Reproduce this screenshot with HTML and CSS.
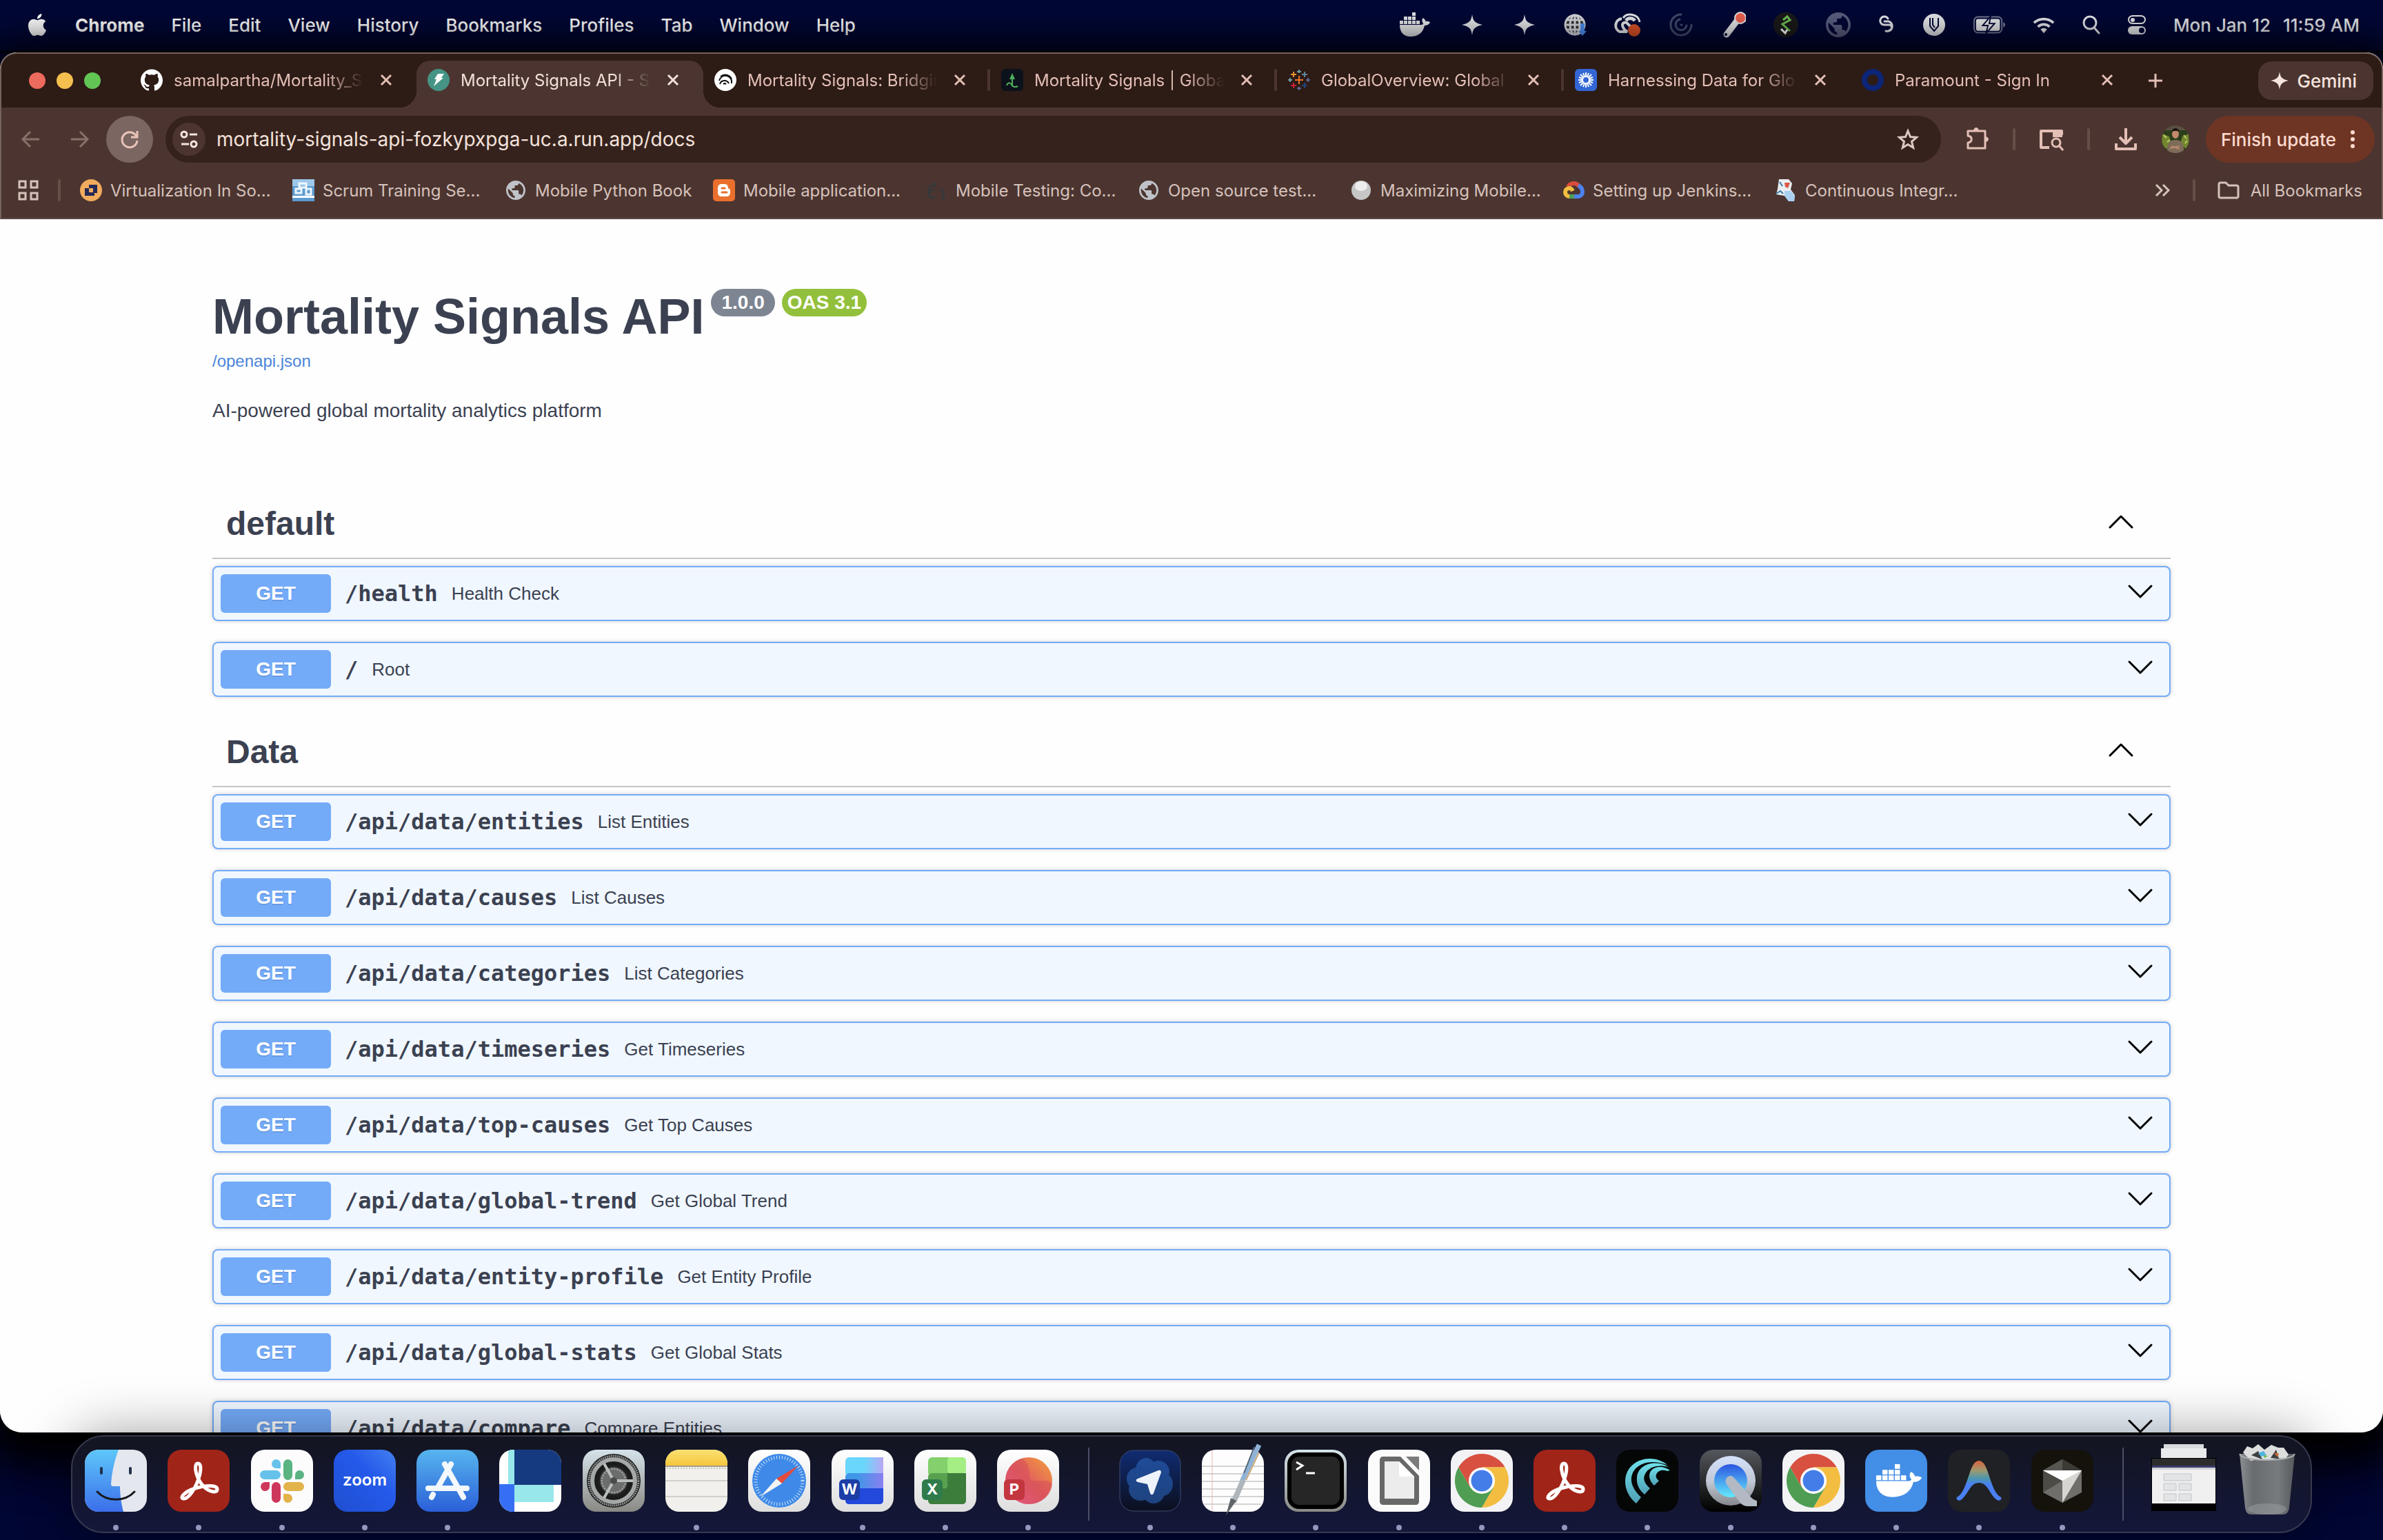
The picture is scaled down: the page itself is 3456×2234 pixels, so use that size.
FILE: index.html
```html
<!DOCTYPE html>
<html lang="en">
<head>
    <meta charset="UTF-8">
    <meta name="viewport" content="width=device-width, initial-scale=1.0">
    <title>Mortality Signals API - Swagger UI</title>
    <link rel="stylesheet" href="styles.css">
</head>
<body>
    <!-- Shared shapes -->
    <svg class="defs" width="0" height="0" aria-hidden="true">
        <defs>
            <symbol id="close" viewBox="0 0 20 20"><path d="M3 3l14 14M17 3L3 17" stroke="currentColor" stroke-width="3" fill="none"/></symbol>
            <symbol id="down" viewBox="0 0 40 40"><path d="M4 9l16 16L36 9" fill="none" stroke="#000" stroke-width="3" stroke-linecap="round" stroke-linejoin="round"/></symbol>
            <symbol id="up" viewBox="0 0 40 40"><path d="M4 25l16-16 16 16" fill="none" stroke="#000" stroke-width="3" stroke-linecap="round" stroke-linejoin="round"/></symbol>
            <symbol id="sparkle" viewBox="0 0 30 30"><path d="M15 0c1 6 2 9 5 11 3 2.5 6 3 10 4-4 1-7 1.500-10 4-3 2-4 5-5 11-1-6-2-9-5-11-3-2.500-6-3-10-4 4-1 7-1.500 10-4 3-2 4-5 5-11z" fill="currentColor"/></symbol>
            <symbol id="earth" viewBox="2 2 20 20"><path fill="currentColor" d="M12 2C6.480 2 2 6.480 2 12s4.480 10 10 10 10-4.480 10-10S17.520 2 12 2zm-1 17.930c-3.950-.49-7-3.850-7-7.930 0-.62.08-1.210.21-1.790L9 15v1c0 1.100.9 2 2 2v1.930zm6.900-2.540c-.26-.81-1-1.390-1.900-1.390h-1v-3c0-.55-.45-1-1-1H8v-2h2c.55 0 1-.45 1-1V7h2c1.100 0 2-.9 2-2v-.41c2.930 1.190 5 4.060 5 7.410 0 2.080-.8 3.970-2.100 5.390z"/></symbol>
            <symbol id="whale" viewBox="0 0 44 36">
                <path fill="currentColor" d="M0 18h31c2 0 3-1 3-2-2-3-2-5-.5-8 2.500 1 3.500 3 4 5 2-.5 4 0 6.500 1-1 3.500-4 5-8 5-2 10-9 16-20 16C5 35 0 28 0 18zM0 12h5v5H0zM6 12h5v5H6zM12 12h5v5h-5zM18 12h5v5h-5zM24 12h5v5h-5zM6 6h5v5H6zM12 6h5v5h-5zM18 6h5v5h-5zM18 0h5v5h-5z"/>
            </symbol>
            <symbol id="acrobat" viewBox="0 0 90 90">
                <rect width="90" height="90" rx="20" fill="#a12418"/>
                <path d="M44 20c5 0 5 10 1 22C40 57 30 72 23 71c-6-1 1-10 17-15 17-5 33-5 32 2-1 6-15 3-24-10C40 36 38 20 44 20z" fill="none" stroke="#fff" stroke-width="5"/>
            </symbol>
            <symbol id="chrome" viewBox="0 0 90 90">
                <rect width="90" height="90" rx="20" fill="#f3f3f5"/>
                <path d="M11.200 25.500A39 39 0 0 1 78.800 25.500H45L28.100 54.750z" fill="#d8503f"/>
                <path d="M78.800 25.500A39 39 0 0 1 45 84l16.900-29.250L45 25.500z" fill="#f3bd42"/>
                <path d="M45 84A39 39 0 0 1 11.200 25.500l16.900 29.250h33.800z" fill="#4f9d52"/>
                <circle cx="45" cy="45" r="19" fill="#fff"/>
                <circle cx="45" cy="45" r="15.500" fill="#447de8"/>
            </symbol>
            <linearGradient id="gSky" x2="0" y2="1"><stop stop-color="#57b5ef"/><stop offset="1" stop-color="#2a5fd8"/></linearGradient>
            <linearGradient id="gFinder" x2="0" y2="1"><stop stop-color="#5ec7fa"/><stop offset="1" stop-color="#3b6eea"/></linearGradient>
            <linearGradient id="gPaper" x2="0" y2="1"><stop stop-color="#fff"/><stop offset="1" stop-color="#dedede"/></linearGradient>
            <linearGradient id="gZoom" x1="1" y1="0" x2="0" y2="1"><stop stop-color="#4480f0"/><stop offset=".4" stop-color="#2459ea"/><stop offset="1" stop-color="#1f4fd0"/></linearGradient>
            <linearGradient id="gSilver" x2="0" y2="1"><stop stop-color="#d5e3ea"/><stop offset="1" stop-color="#8a8984"/></linearGradient>
            <linearGradient id="gYellow" x2="0" y2="1"><stop stop-color="#fae173"/><stop offset="1" stop-color="#f5c63c"/></linearGradient>
            <linearGradient id="gNight" x2="0" y2="1"><stop stop-color="#102c72"/><stop offset="1" stop-color="#0c0f1e"/></linearGradient>
            <linearGradient id="gPpt" x1="0" y1="1" x2="1" y2="0"><stop stop-color="#ee66b0"/><stop offset=".5" stop-color="#e2605c"/><stop offset="1" stop-color="#f2a03c"/></linearGradient>
            <linearGradient id="gWordA" x2="1"><stop offset=".5" stop-color="#6ad6fb"/><stop offset="1" stop-color="#b9a8f4"/></linearGradient>
            <linearGradient id="gWordB" x2="1"><stop offset=".3" stop-color="#3f97e8"/><stop offset="1" stop-color="#8a7ff0"/></linearGradient>
            <linearGradient id="gDark" x2="0" y2="1"><stop stop-color="#55585d"/><stop offset="1" stop-color="#000"/></linearGradient>
            <linearGradient id="gSteel" x2="0" y2="1"><stop stop-color="#d4e2fb"/><stop offset=".5" stop-color="#c3c9d6"/><stop offset="1" stop-color="#85888d"/></linearGradient>
            <linearGradient id="gLens" x2="0" y2="1"><stop stop-color="#2c55e0"/><stop offset="1" stop-color="#64eafc"/></linearGradient>
            <linearGradient id="gArc" x2="0" y2="1"><stop stop-color="#d8643f"/><stop offset=".25" stop-color="#9c9a70"/><stop offset=".45" stop-color="#4a95b0"/><stop offset=".6" stop-color="#4b80f2"/></linearGradient>
            <linearGradient id="gBin" x2="1"><stop stop-color="#8b8f92"/><stop offset=".25" stop-color="#686c6f"/><stop offset=".7" stop-color="#777b7e"/><stop offset="1" stop-color="#55595c"/></linearGradient>
            <linearGradient id="gTeal" x2="0" y2="1"><stop stop-color="#6fe0ea"/><stop offset="1" stop-color="#4f9fb4"/></linearGradient>
        </defs>
    </svg>

    <!-- System menu bar -->
    <header class="menubar">
        <nav class="menus">
            <svg class="apple" viewBox="0 0 24 24" width="32" height="32"><path fill="#fff" d="M12.152 6.896c-.948 0-2.415-1.078-3.960-1.040-2.040.027-3.910 1.183-4.961 3.014-2.117 3.675-.546 9.103 1.519 12.090 1.013 1.454 2.208 3.090 3.792 3.039 1.520-.065 2.090-.987 3.935-.987 1.831 0 2.350.987 3.960.948 1.637-.026 2.676-1.480 3.676-2.948 1.156-1.688 1.636-3.325 1.662-3.415-.039-.013-3.182-1.221-3.220-4.857-.026-3.040 2.480-4.494 2.597-4.559-1.429-2.090-3.623-2.324-4.390-2.376-2-.156-3.675 1.090-4.610 1.090zM15.530 3.830c.843-1.012 1.400-2.427 1.245-3.830-1.207.052-2.662.805-3.532 1.818-.78.896-1.454 2.338-1.273 3.714 1.338.104 2.715-.688 3.559-1.701"/></svg>
            <strong>Chrome</strong>
            <span>File</span>
            <span>Edit</span>
            <span>View</span>
            <span>History</span>
            <span>Bookmarks</span>
            <span>Profiles</span>
            <span>Tab</span>
            <span>Window</span>
            <span>Help</span>
        </nav>
        <div class="status">
            <svg width="44" height="36"><use href="#whale"/></svg>
            <svg width="42" height="30"><use href="#sparkle"/></svg>
            <svg width="30" height="30"><use href="#sparkle"/></svg>
            <svg width="36" height="34" viewBox="0 0 36 34"><circle cx="18" cy="17" r="15" fill="#333"/><g fill="none" stroke="#d5d7dc" stroke-width="3"><circle cx="18" cy="17" r="14"/><ellipse cx="18" cy="17" rx="7" ry="14"/><path d="M18 3v28M4 17h28M6 10h24M6 24h24"/></g><path d="M26 15h6v11h3l-6 7-6-7h3z" fill="#4f93f5"/></svg>
            <svg width="36" height="36" viewBox="0 0 36 36" overflow="visible"><g fill="none" stroke="#e6e7ea"><path d="M10 9a10 10 0 0 0-3 19h11c-4-2-6-5-7-9a4 4 0 0 1 7-3l6 6" stroke-width="4"/><path d="M12 8C18 0 34 2 36 14" stroke-width="3"/><path d="M16 12c4-5 10-4 13 0" stroke-width="5"/></g><circle cx="28" cy="26" r="9" fill="#dc5228"/></svg>
            <svg width="40" height="34" viewBox="0 0 40 34"><g fill="none" stroke="#444a6c" stroke-width="3" stroke-linecap="round"><path d="M20 2a15 15 0 1 0 15 15"/><path d="M18 9a8 8 0 1 0 10 9"/><path d="M20 17h1"/></g></svg>
            <svg width="34" height="40" viewBox="0 0 34 40"><path d="M6 34L22 13" stroke="#e6e7ea" stroke-width="9" stroke-linecap="round"/><circle cx="26" cy="10" r="9" fill="#e6e7ea"/><circle cx="26" cy="10" r="7" fill="#ee6352"/><circle cx="5" cy="34" r="2" fill="#000735"/></svg>
            <svg width="36" height="36" viewBox="0 0 36 36"><circle cx="18" cy="18" r="18" fill="#1a1a1a"/><path d="M14 11l6-5 4 5-11 6 11 10" fill="none" stroke="#6fbf57" stroke-width="3"/><path d="M11 24l6 6 3-5" fill="none" stroke="#fff" stroke-width="3"/></svg>
            <svg class="dim" width="36" height="36"><use href="#earth"/></svg>
            <svg width="24" height="30" viewBox="0 0 24 30"><g fill="none" stroke="#e6e7ea" stroke-width="3" stroke-linecap="round"><path d="M14 6A6 6 0 1 0 8 15h7a4 4 0 0 1 1 8"/><path d="M9 10h6a7 7 0 1 1-4 14"/></g></svg>
            <svg width="34" height="32" viewBox="0 0 34 32"><circle cx="17" cy="16" r="16" fill="#e6e7ea"/><path d="M11 6v12l6 7 6-7V6M15 6v10l3 4" fill="none" stroke="#000735" stroke-width="2"/></svg>
            <svg width="46" height="26" viewBox="0 0 48 26"><rect x="1" y="1" width="42" height="24" rx="6" fill="none" stroke="#767a94" stroke-width="2"/><rect x="4" y="4" width="36" height="18" rx="3" fill="#e6e7ea"/><path d="M45 9c4 1 4 7 0 8z" fill="#767a94"/><path d="M26 0L14 14h8l-3 12 13-15h-8z" fill="#e6e7ea" stroke="#000735" stroke-width="2"/></svg>
            <svg width="32" height="26" viewBox="0 0 34 26"><g fill="none" stroke="#e6e7ea" stroke-width="4"><path d="M2 10a22 22 0 0 1 30 0"/><path d="M8 16a13 13 0 0 1 18 0"/></g><path d="M17 26l-5-6a8 8 0 0 1 10 0z" fill="#e6e7ea"/></svg>
            <svg width="26" height="28" viewBox="0 0 26 28"><circle cx="11" cy="11" r="9" fill="none" stroke="#e6e7ea" stroke-width="3"/><path d="M17 18l7 8" stroke="#e6e7ea" stroke-width="3" stroke-linecap="round"/></svg>
            <svg width="26" height="28" viewBox="0 0 26 28"><rect x="1" y="1" width="24" height="11" rx="6" fill="none" stroke="#e6e7ea" stroke-width="2"/><circle cx="7" cy="7" r="3" fill="#e6e7ea"/><rect y="16" width="26" height="12" rx="6" fill="#e6e7ea"/><circle cx="20" cy="22" r="4" fill="#000735"/></svg>
            <time class="clock"><span>Mon Jan 12</span><span>11:59 AM</span></time>
        </div>
    </header>

    <!-- Browser window -->
    <main class="window">
        <div class="browser">
            <div class="tabstrip">
                <div class="lights"><i class="red"></i><i class="yellow"></i><i class="green"></i></div>
                <div class="tab">
                    <svg width="32" height="32" viewBox="0 0 24 24"><path fill="#fff" d="M12 .297c-6.630 0-12 5.373-12 12 0 5.303 3.438 9.800 8.205 11.385.6.113.82-.258.82-.577 0-.285-.01-1.040-.015-2.040-3.338.724-4.042-1.610-4.042-1.610C4.422 18.070 3.633 17.700 3.633 17.700c-1.087-.744.084-.729.084-.729 1.205.084 1.838 1.236 1.838 1.236 1.070 1.835 2.809 1.305 3.495.998.108-.776.417-1.305.76-1.605-2.665-.3-5.466-1.332-5.466-5.930 0-1.310.465-2.380 1.235-3.220-.135-.303-.54-1.523.105-3.176 0 0 1.005-.322 3.300 1.230.96-.267 1.980-.399 3-.405 1.020.006 2.040.138 3 .405 2.280-1.552 3.285-1.230 3.285-1.230.645 1.653.24 2.873.12 3.176.765.84 1.230 1.910 1.230 3.220 0 4.610-2.805 5.625-5.475 5.920.42.36.81 1.096.81 2.220 0 1.606-.015 2.896-.015 3.286 0 .315.21.69.825.57C20.565 22.092 24 17.592 24 12.297c0-6.627-5.373-12-12-12"/></svg>
                    <span class="tab-title">samalpartha/Mortality_S</span>
                    <button class="tab-close" aria-label="Close tab"><svg width="20" height="20"><use href="#close"/></svg></button>
                </div>
                <div class="tab active">
                    <svg width="32" height="32" viewBox="0 0 32 32"><circle cx="16" cy="16" r="16" fill="#459485"/><path d="M15 7h9l-4 6h3L9 25l4-10H10z" fill="#fff"/></svg>
                    <span class="tab-title">Mortality Signals API - S</span>
                    <button class="tab-close" aria-label="Close tab"><svg width="20" height="20"><use href="#close"/></svg></button>
                </div>
                <div class="tab line">
                    <svg width="32" height="32" viewBox="0 0 32 32"><circle cx="16" cy="16" r="16" fill="#fff"/><g fill="none" stroke="#111" stroke-width="2"><path d="M7 17a9 9 0 0 1 18 4"/><path d="M8 22a7 7 0 0 1 13-1"/><path d="M9 11a10 10 0 0 1 16 4"/><path d="M13 22a3 3 0 0 1 4 0"/></g></svg>
                    <span class="tab-title">Mortality Signals: Bridgin</span>
                    <button class="tab-close" aria-label="Close tab"><svg width="20" height="20"><use href="#close"/></svg></button>
                </div>
                <div class="tab line">
                    <svg width="32" height="32" viewBox="0 0 32 32"><rect width="32" height="32" rx="6" fill="#0c121b"/><path d="M16 12v11c0 3 4 4 8 2M8 24c2-5 6-5 8 1" fill="none" stroke="#4fae5c" stroke-width="2"/><path d="M16 6l4 9h-8z" fill="#4fae5c"/></svg>
                    <span class="tab-title">Mortality Signals | Globa</span>
                    <button class="tab-close" aria-label="Close tab"><svg width="20" height="20"><use href="#close"/></svg></button>
                </div>
                <div class="tab line">
                    <svg width="32" height="32" viewBox="0 0 32 32" fill="none" stroke-width="2"><path d="M16 10v12M10 16h12" stroke="#e8762c"/><path d="M8 4v8M4 8h8" stroke="#eb912c"/><path d="M24 4v8M20 8h8" stroke="#5b879b"/><path d="M8 20v8M4 24h8" stroke="#c72035"/><path d="M24 20v8M20 24h8" stroke="#1f457e"/><path d="M16 1v5M13 4h6M3 13v6M0 16h6" stroke="#7099a6"/><path d="M16 26v5M13 28h6M29 13v6M26 16h6" stroke="#5c6692"/></svg>
                    <span class="tab-title">GlobalOverview: Global</span>
                    <button class="tab-close" aria-label="Close tab"><svg width="20" height="20"><use href="#close"/></svg></button>
                </div>
                <div class="tab">
                    <svg width="32" height="32" viewBox="0 0 32 32"><rect width="32" height="32" rx="6" fill="#3367d6"/><path d="M16 5v22M5 16h22M8 8l16 16M24 8L8 24M12 6l8 20M20 6l-8 20M6 12l20 8M26 12L6 20" stroke="#fff" stroke-width="2"/><circle cx="16" cy="16" r="4" fill="#3367d6"/></svg>
                    <span class="tab-title">Harnessing Data for Glo</span>
                    <button class="tab-close" aria-label="Close tab"><svg width="20" height="20"><use href="#close"/></svg></button>
                </div>
                <div class="tab">
                    <svg width="32" height="32" viewBox="0 0 32 32"><circle cx="16" cy="16" r="12" fill="none" stroke="#0c2577" stroke-width="8"/></svg>
                    <span class="tab-title">Paramount - Sign In</span>
                    <button class="tab-close" aria-label="Close tab"><svg width="20" height="20"><use href="#close"/></svg></button>
                </div>
                <button class="new-tab" aria-label="New tab"><svg width="24" height="24" viewBox="0 0 24 24"><path d="M12 2v20M2 12h20" stroke="currentColor" stroke-width="3"/></svg></button>
                <button class="gemini"><svg width="26" height="26"><use href="#sparkle"/></svg>Gemini</button>
            </div>

            <div class="toolbar">
                <button class="nav-btn faded" aria-label="Back"><svg width="28" height="28" viewBox="0 0 28 28"><path d="M27 14H3M14 3L3 14l11 11" fill="none" stroke="currentColor" stroke-width="3"/></svg></button>
                <button class="nav-btn faded" aria-label="Forward"><svg width="28" height="28" viewBox="0 0 28 28"><path d="M1 14h24M14 3l11 11-11 11" fill="none" stroke="currentColor" stroke-width="3"/></svg></button>
                <button class="nav-btn reload" aria-label="Reload"><svg width="28" height="28" viewBox="0 0 28 28"><path d="M24 10a11 11 0 1 0 1 6M25 2v9h-9" fill="none" stroke="currentColor" stroke-width="3"/></svg></button>
                <div class="address">
                    <button class="site-info" aria-label="Site information"><svg width="28" height="28" viewBox="0 0 28 28"><g fill="none" stroke="#f4e5e0" stroke-width="3"><circle cx="7" cy="7" r="4"/><path d="M15 7h11M3 21h11"/><circle cx="21" cy="21" r="4"/></g></svg></button>
                    <input class="url" type="text" aria-label="Address" value="mortality-signals-api-fozkypxpga-uc.a.run.app/docs">
                    <button class="star" aria-label="Bookmark this page"><svg width="32" height="32" viewBox="0 0 32 32"><path d="M16 4l3.500 8.500 9 .8-7 6 2.200 9L16 23.500l-7.700 4.800 2.200-9-7-6 9-.8z" fill="none" stroke="#d9c8c3" stroke-width="3"/></svg></button>
                </div>
                <div class="actions">
                    <svg width="36" height="36" viewBox="0 0 36 36"><path d="M5 6h25v25H5v-8c7-1 7-9 0-10z" fill="none" stroke="currentColor" stroke-width="3" stroke-linejoin="round"/><path d="M13 6a4 5 0 0 1 8 0zM30 14a5 4 0 0 1 0 8z" fill="currentColor"/></svg>
                    <i class="divider"></i>
                    <svg width="36" height="36" viewBox="0 0 36 36"><path d="M15 30H3V6h30v6" fill="none" stroke="currentColor" stroke-width="4" stroke-linejoin="round"/><path d="M20 5h14v10H20z" fill="currentColor"/><circle cx="25" cy="23" r="6" fill="none" stroke="currentColor" stroke-width="3"/><path d="M29 27l6 7" stroke="currentColor" stroke-width="3"/></svg>
                    <i class="divider"></i>
                    <svg width="36" height="36" viewBox="0 0 36 36"><path d="M18 2v22M9 15l9 9 9-9M4 24v8h28v-8" fill="none" stroke="currentColor" stroke-width="4" stroke-linejoin="round"/></svg>
                    <svg class="avatar" width="40" height="40" viewBox="0 0 40 40"><rect width="40" height="40" fill="#2c3d1a"/><path d="M0 0h40v7H0z" fill="#5a4f42"/><path d="M1 12l10 4 3 12-8 6-6-8zM39 12l-9 4-3 10 8 8 5-8z" fill="#71862f"/><path d="M3 14l4 4M8 24l4-3M32 14l4 5M34 26l3-4" stroke="#c3cf6b" stroke-width="2"/><path d="M8 40c-1-12 2-19 12-19s13 7 12 19z" fill="#7d6c59"/><ellipse cx="20" cy="12" rx="5" ry="7" fill="#c2896b"/><path d="M15 10c-1-8 11-8 10 0l-2-2h-6z" fill="#1b1512"/><path d="M12 33l14-3M14 30l12 4" stroke="#b98a6c" stroke-width="2"/></svg>
                </div>
                <button class="update">Finish update<svg width="8" height="28" viewBox="0 0 8 28"><g fill="#ffdacf"><circle cx="4" cy="4" r="3"/><circle cx="4" cy="14" r="3"/><circle cx="4" cy="24" r="3"/></g></svg></button>
            </div>

            <div class="bookmarks">
                <svg class="apps" width="30" height="30" viewBox="0 0 30 30"><path d="M2 2h9v9H2zM19 2h9v9h-9zM2 19h9v9H2zM19 19h9v9h-9z" fill="none" stroke="currentColor" stroke-width="3"/></svg>
                <i class="divider"></i>
                <a class="bookmark" href="#"><svg width="32" height="32" viewBox="0 0 32 32"><circle cx="16" cy="16" r="16" fill="#f0ab5e"/><path d="M13 8h12v12h-4v4H7V13h6z" fill="#262a55"/><path d="M13 13h6v6h-6z" fill="#f0ab5e"/></svg>Virtualization In So...</a>
                <a class="bookmark" href="#"><svg width="32" height="32" viewBox="0 0 32 32"><rect width="32" height="32" fill="#5c9bd0"/><path d="M0 0h32v10H0z" fill="#9cc8ea"/><path d="M10 6h10v6H10zM5 14h8v6H5zM20 14h7v8h-7z" fill="none" stroke="#eef6fc" stroke-width="3"/><path d="M0 24h32v3H0z" fill="#fff"/></svg>Scrum Training Se...</a>
                <a class="bookmark auto" href="#"><svg class="grey" width="32" height="28"><use href="#earth"/></svg>Mobile Python Book</a>
                <a class="bookmark" href="#"><svg width="32" height="32" viewBox="0 0 32 32"><rect width="32" height="32" rx="5" fill="#ea6f2d"/><path d="M13 7h4c4 0 5 3 5 6 0 1 3 0 3 3v3c0 4-2 6-6 6h-6c-4 0-6-2-6-6v-6c0-4 2-6 6-6z" fill="#fff"/><path d="M13 13h4M13 19h7" stroke="#ea6f2d" stroke-width="3" stroke-linecap="round"/></svg>Mobile application...</a>
                <a class="bookmark" href="#"><svg width="32" height="32" viewBox="0 0 32 32"><g fill="none" stroke="#37383a" stroke-width="3"><path d="M5 12v14M5 12l9-6v6M13 16a5 6 0 1 0 2 9"/><path d="M20 16c6-3 8 2 5 11l4 1"/></g></svg>Mobile Testing: Co...</a>
                <a class="bookmark" href="#"><svg class="grey" width="32" height="28"><use href="#earth"/></svg>Open source test...</a>
                <a class="bookmark" href="#"><svg width="32" height="32" viewBox="0 0 32 32"><circle cx="16" cy="16" r="14" fill="#c6c6c6"/><ellipse cx="16" cy="10" rx="9" ry="7" fill="#ededed"/></svg>Maximizing Mobile...</a>
                <a class="bookmark" href="#"><svg width="32" height="32" viewBox="0 0 32 32" fill="none" stroke-width="6"><path d="M8 11c3-6 12-7 16-1" stroke="#da4c3b"/><path d="M23 9c8 4 8 15 0 16h-6" stroke="#4d82ee"/><path d="M17 25H9" stroke="#4f9f57"/><path d="M10 25c-8-1-8-12 0-12 3 0 4 2 5 4" stroke="#f0bd42"/></svg>Setting up Jenkins...</a>
                <a class="bookmark" href="#"><svg width="32" height="32" viewBox="0 0 32 32"><path d="M6 0h14l5 6-2 9 6 8-1 9h-8l-6-8-12-2 2-8z" fill="#e9eef2"/><path d="M14 17h9l6 7-1 8h-8l-6-8z" fill="#a9d0f0"/><path d="M14 5h8l-3 8-4-2z" fill="#dd5844"/><path d="M2 21l6-4 4 4M7 4l4 6" stroke="#3979a8" stroke-width="2" fill="none"/></svg>Continuous Integr...</a>
                <svg class="more" width="24" height="24" viewBox="0 0 24 24"><path d="M3 4l8 8-8 8M13 4l8 8-8 8" fill="none" stroke="currentColor" stroke-width="3"/></svg>
                <i class="divider"></i>
                <a class="bookmark all" href="#"><svg width="32" height="26" viewBox="0 0 32 26"><path d="M2 4c0-1 1-2 2-2h8l4 4h12c1 0 2 1 2 2v14c0 1-1 2-2 2H4c-1 0-2-1-2-2z" fill="none" stroke="currentColor" stroke-width="3"/></svg>All Bookmarks</a>
            </div>
        </div>

        <!-- Swagger page -->
        <div class="page">
            <section class="info">
                <div class="title-row">
                    <h1>Mortality Signals API</h1>
                    <span class="badge version">1.0.0</span>
                    <span class="badge oas">OAS 3.1</span>
                </div>
                <a class="spec-link" href="#">/openapi.json</a>
                <p class="description">AI-powered global mortality analytics platform</p>
            </section>

            <section>
                <button class="tag"><h2>default</h2><svg width="40" height="40"><use href="#up"/></svg></button>
                <button class="opblock"><span class="method">GET</span><code>/health</code><span class="summary">Health Check</span><svg width="40" height="40"><use href="#down"/></svg></button>
                <button class="opblock"><span class="method">GET</span><code>/</code><span class="summary">Root</span><svg width="40" height="40"><use href="#down"/></svg></button>
            </section>

            <section>
                <button class="tag"><h2>Data</h2><svg width="40" height="40"><use href="#up"/></svg></button>
                <button class="opblock"><span class="method">GET</span><code>/api/data/entities</code><span class="summary">List Entities</span><svg width="40" height="40"><use href="#down"/></svg></button>
                <button class="opblock"><span class="method">GET</span><code>/api/data/causes</code><span class="summary">List Causes</span><svg width="40" height="40"><use href="#down"/></svg></button>
                <button class="opblock"><span class="method">GET</span><code>/api/data/categories</code><span class="summary">List Categories</span><svg width="40" height="40"><use href="#down"/></svg></button>
                <button class="opblock"><span class="method">GET</span><code>/api/data/timeseries</code><span class="summary">Get Timeseries</span><svg width="40" height="40"><use href="#down"/></svg></button>
                <button class="opblock"><span class="method">GET</span><code>/api/data/top-causes</code><span class="summary">Get Top Causes</span><svg width="40" height="40"><use href="#down"/></svg></button>
                <button class="opblock"><span class="method">GET</span><code>/api/data/global-trend</code><span class="summary">Get Global Trend</span><svg width="40" height="40"><use href="#down"/></svg></button>
                <button class="opblock"><span class="method">GET</span><code>/api/data/entity-profile</code><span class="summary">Get Entity Profile</span><svg width="40" height="40"><use href="#down"/></svg></button>
                <button class="opblock"><span class="method">GET</span><code>/api/data/global-stats</code><span class="summary">Get Global Stats</span><svg width="40" height="40"><use href="#down"/></svg></button>
                <button class="opblock"><span class="method">GET</span><code>/api/data/compare</code><span class="summary">Compare Entities</span><svg width="40" height="40"><use href="#down"/></svg></button>
            </section>
        </div>
    </main>

    <!-- Dock -->
    <footer class="dock-area">
        <div class="dock">
            <div class="app running"><svg viewBox="0 0 90 90"><rect width="90" height="90" rx="20" fill="#e4e8ee"/><path d="M20 0h29c-7 18-10 36-11 50 0 2 1 3 3 3h10c0 12 2 26 5 37H20A20 20 0 0 1 0 70V20A20 20 0 0 1 20 0z" fill="url(#gFinder)"/><path d="M24 27v7M66 27v7" stroke="#22304a" stroke-width="4" stroke-linecap="round"/><path d="M18 61c14 15 40 15 54 0" fill="none" stroke="#16181d" stroke-width="3" stroke-linecap="round"/></svg></div>
            <div class="app running"><svg><use href="#acrobat"/></svg></div>
            <div class="app running"><svg viewBox="0 0 90 90"><rect width="90" height="90" rx="20" fill="#fcfcfd"/><path d="M43 27h-7a6.500 6.500 0 1 1 7-7z" fill="#66c2ea"/><rect x="13" y="30" width="30" height="13" rx="6.500" fill="#66c2ea"/><rect x="47" y="14" width="13" height="30" rx="6.500" fill="#5bb381"/><path d="M64 43v-6a6.500 6.500 0 1 1 7 6z" fill="#5bb381"/><rect x="30" y="47" width="13" height="30" rx="6.500" fill="#ce375c"/><path d="M27 47v6a6.500 6.500 0 1 1-7-6z" fill="#ce375c"/><rect x="47" y="47" width="30" height="13" rx="6.500" fill="#e2b34b"/><path d="M47 64h6a6.500 6.500 0 1 1-6 7z" fill="#e2b34b"/></svg></div>
            <div class="app running"><svg viewBox="0 0 90 90"><rect width="90" height="90" rx="20" fill="url(#gZoom)"/><text class="zoom-text" x="45" y="52" text-anchor="middle">zoom</text></svg></div>
            <div class="app running"><svg viewBox="0 0 90 90"><rect width="90" height="90" rx="20" fill="url(#gSky)"/><path d="M17 56h56M50 21L32 53M24 65l-2 4M41 21l27 48" stroke="#f3f8fd" stroke-width="8" stroke-linecap="round"/></svg></div>
            <div class="app"><svg class="clip" viewBox="0 0 90 90"><path d="M0 0h90v90H0z" fill="#fff"/><path d="M13 0h9v50h-9zM22 51h57v25H22z" fill="#98e7ea"/><path d="M22 0h68v51H22z" fill="#153a80"/><path d="M0 50h22v40H0z" fill="#366ff4"/></svg></div>
            <div class="app"><svg viewBox="0 0 90 90"><rect width="90" height="90" rx="20" fill="url(#gSilver)"/><circle cx="45" cy="45" r="39" fill="#1c1c1c"/><circle cx="45" cy="45" r="36" fill="none" stroke="#8f9191" stroke-width="3" stroke-dasharray="2 1"/><circle cx="45" cy="45" r="31" fill="none" stroke="#a5a8a8" stroke-width="6"/><circle cx="45" cy="45" r="21" fill="#6b6d6d" stroke="#222" stroke-width="3"/><circle cx="45" cy="45" r="17" fill="none" stroke="#aaa" stroke-width="2" stroke-dasharray="2 2"/><path d="M45 45h28M45 45L31 20M45 45L31 70" stroke="#b9bdbd" stroke-width="4"/><circle cx="45" cy="45" r="5" fill="#494b4b"/></svg></div>
            <div class="app running"><svg class="clip" viewBox="0 0 90 90"><path d="M0 0h90v90H0z" fill="#f1f0ec"/><path d="M0 0h90v23H0z" fill="url(#gYellow)"/><path d="M0 24h90" stroke="#a39d8c" stroke-width="2"/><path d="M2 27h88" stroke="#c9c6be" stroke-width="2" stroke-dasharray="2 2"/><path d="M0 45h90M0 68h90" stroke="#d2d0cd" stroke-width="2"/></svg></div>
            <div class="app"><svg viewBox="0 0 90 90"><rect width="90" height="90" rx="20" fill="url(#gPaper)"/><circle cx="45" cy="45" r="39" fill="#3f8ae8"/><circle cx="45" cy="45" r="34" fill="none" stroke="#d5e7fb" stroke-width="5" stroke-dasharray="1 3"/><path d="M73 23L41 42l8 7z" fill="#e34b3d"/><path d="M18 68l23-26 8 7z" fill="#f4f4f4"/></svg></div>
            <div class="app running"><svg viewBox="0 0 90 90"><rect width="90" height="90" rx="20" fill="url(#gPaper)"/><path d="M26 11h49v24H20V18c0-4 2-7 6-7z" fill="url(#gWordA)"/><path d="M26 34h49v22H20V40c0-4 2-6 6-6z" fill="url(#gWordB)"/><path d="M20 56h55v17c0 4-2 6-6 6H26c-4 0-6-2-6-6z" fill="#2248dc"/><rect x="11" y="43" width="30" height="30" rx="6" fill="#1c3ea6"/><text class="badge-letter" x="26" y="65" text-anchor="middle">W</text></svg></div>
            <div class="app running"><svg viewBox="0 0 90 90"><rect width="90" height="90" rx="20" fill="url(#gPaper)"/><path d="M26 11h24v24H20V18c0-4 2-7 6-7z" fill="#83d06c"/><rect x="48" y="11" width="27" height="24" rx="5" fill="#a4ee84"/><path d="M48 34h27v39c0 4-2 6-6 6H26c-4 0-6-2-6-6V56h22c4 0 6-2 6-6z" fill="#3d7d3c"/><path d="M26 34h22v16c0 4-2 6-6 6H20V40c0-4 2-6 6-6z" fill="#57a14f"/><rect x="11" y="43" width="30" height="30" rx="6" fill="#2f7b4c"/><text class="badge-letter" x="26" y="65" text-anchor="middle">X</text></svg></div>
            <div class="app running"><svg viewBox="0 0 90 90"><rect width="90" height="90" rx="20" fill="url(#gPaper)"/><circle cx="46" cy="45" r="34" fill="url(#gPpt)"/><path d="M36 13c8 4 11 12 11 24 0 6 3 8 8 8h15c6 0 9 3 10 6-3 20-20 28-34 28S12 66 12 45c0-16 10-28 24-32z" fill="#d44a5c" opacity=".5"/><rect x="10" y="43" width="30" height="30" rx="6" fill="#c4363f"/><text class="badge-letter" x="25" y="65" text-anchor="middle">P</text></svg></div>
            <i class="dock-line"></i>
            <div class="app running"><svg viewBox="0 0 90 90"><rect x="1" y="1" width="88" height="88" rx="20" fill="url(#gNight)" stroke="#3f4b70" stroke-width="1"/><g fill="#2a63b8" opacity=".6"><ellipse cx="39" cy="29" rx="15" ry="17"/><ellipse cx="57" cy="32" rx="16" ry="16"/><ellipse cx="63" cy="50" rx="15" ry="17"/><ellipse cx="50" cy="62" rx="16" ry="16"/><ellipse cx="31" cy="58" rx="17" ry="16"/><ellipse cx="26" cy="42" rx="15" ry="16"/></g><path d="M57 30c3-1 4 1 4 3L50 63c-1 3-4 3-5 0l-4-13-14-3c-3-1-3-4 0-5z" fill="#eef2fa"/></svg></div>
            <div class="app running"><svg viewBox="0 0 90 90"><rect width="90" height="90" rx="20" fill="#fdfdfd"/><path d="M0 24h90M0 35h90M0 46h90M0 57h90M0 68h90M4 79h82" stroke="#a9a9a9" stroke-width="1"/><path d="M15 1v88" stroke="#f0b6b6" stroke-width="1"/><path d="M83-7L58 46" stroke="#8fb2d6" stroke-width="7"/><path d="M83 4L64 44" stroke="#c9a678" stroke-width="2"/><path d="M60 44L46 76" stroke="#aeb5bb" stroke-width="8"/><path d="M42 70l8 4-15 21z" fill="#5f6468"/><path d="M76-4L61 34" stroke="#56697c" stroke-width="2"/></svg></div>
            <div class="app running"><svg viewBox="0 0 90 90"><rect width="90" height="90" rx="20" fill="url(#gSilver)"/><rect x="4" y="4" width="82" height="82" rx="17" fill="#000"/><rect x="10" y="10" width="70" height="70" rx="11" fill="#262626"/><path d="M17 18l9 5-9 6M31 34h13" fill="none" stroke="#fff" stroke-width="3"/></svg></div>
            <div class="app running"><svg viewBox="0 0 90 90"><rect width="90" height="90" rx="20" fill="#fbfbfb"/><path d="M22 10h25l27 28v37c0 3-2 5-5 5H22c-3 0-5-2-5-5V15c0-3 2-5 5-5z" fill="#686868"/><path d="M55 10h19v20z" fill="#7b7b7b"/><path d="M24 17h21l22 22v32H24z" fill="#ececec"/><path d="M45 17l22 22H45z" fill="#fff"/></svg></div>
            <div class="app running"><svg><use href="#chrome"/></svg></div>
            <div class="app running"><svg><use href="#acrobat"/></svg></div>
            <div class="app running"><svg viewBox="0 0 90 90"><rect width="90" height="90" rx="20" fill="#050606"/><g fill="url(#gTeal)"><path d="M74 22C52 4 14 14 13 46c0 12 6 24 16 32l7-9C22 56 18 42 26 30c8-11 26-16 48-8z"/><path d="M76 25C58 14 32 20 30 40c-1 10 3 18 11 25l8-9c-8-7-11-14-7-21 5-10 18-14 34-10z"/><path d="M78 30C64 20 48 26 48 38c0 5 3 10 7 14l7-7c-4-3-5-6-4-9 2-5 8-8 16-5z"/></g></svg></div>
            <div class="app running"><svg viewBox="0 0 90 90"><rect width="90" height="90" rx="20" fill="url(#gDark)"/><circle cx="45" cy="45" r="36" fill="url(#gSteel)"/><circle cx="45" cy="45" r="24" fill="url(#gLens)"/><path d="M39 41c3-4 8-4 11 0l22 25c3 4 6 7 11 8v8H70c-5 0-9-2-12-6L39 50c-2-3-2-6 0-9z" fill="#b3b9c2"/></svg></div>
            <div class="app running"><svg><use href="#chrome"/></svg></div>
            <div class="app running"><svg class="white" viewBox="0 0 90 90"><rect width="90" height="90" rx="20" fill="#438ee6"/><svg x="16" y="21" width="66" height="49" viewBox="0 0 44 36" preserveAspectRatio="none"><use href="#whale"/></svg></svg></div>
            <div class="app running"><svg viewBox="0 0 90 90"><rect width="90" height="90" rx="20" fill="#202124"/><path d="M13 69C30 60 30 16 45 16s15 44 32 53c2 3-3 7-7 3-10-8-12-24-25-24S30 64 20 72c-4 4-9 0-7-3z" fill="url(#gArc)"/></svg></div>
            <div class="app running"><svg viewBox="0 0 90 90"><rect width="90" height="90" rx="20" fill="#14120b"/><path d="M45 14l28 16v32L45 77 17 62V30z" fill="#6f6e6a"/><path d="M45 14v16H17z" fill="#56554f"/><path d="M45 14v16h28z" fill="#3b3a35"/><path d="M17 30l28 15-28 17z" fill="#4c4b46"/><path d="M17 30h56L45 77V45z" fill="#d6d5d2"/><path d="M17 30h56L45 45z" fill="#fff"/></svg></div>
            <i class="dock-line"></i>
            <div class="app"><svg viewBox="0 0 90 90"><path d="M16-8h58v26H16z" fill="#d9dadb"/><path d="M12-2h66v16H12z" fill="#e9eaeb"/><path d="M-2 12h94v77H-2z" fill="#000"/><path d="M-1 13h92v10H-1z" fill="#2c2c2c"/><path d="M-1 23h92v55H-1z" fill="#f0f0f1"/><path d="M-1 23h92v3H-1z" fill="#3a3c6e"/><path d="M-1 26h92v3H-1z" fill="#d2d3d6"/><g fill="#e2e4e6" stroke="#c3c6c9" stroke-width="1"><path d="M16 35h40v10H16zM16 49h18v10H16zM38 49h18v10H38zM16 64h18v10H16zM38 64h18v10H38z"/></g></svg></div>
            <div class="app"><svg viewBox="0 0 90 90"><path d="M5 6h80l-8 78c-1 7-4 10-10 10H23c-6 0-9-3-10-10z" fill="url(#gBin)"/><path d="M10 4l6-9 8 3 8-6 9 8 10-7 10 4 8 0 7 10-5 7-10-2-14 4-14-2-12 2z" fill="#dcdddd"/><path d="M22 8l10-6 6 12zM50 12l8-12 4 13z" fill="#3d3f40"/><path d="M32 5l8-3 4 6-8 2z" fill="#4fb4e0"/><path d="M54 4l8 2-2 5z" fill="#c36a33"/><path d="M40 8l6 1-5 3z" fill="#69b84a"/><ellipse cx="45" cy="86" rx="28" ry="8" fill="#9a9ea0" opacity=".5"/><path d="M5 6c3 12 77 12 80 0" fill="none" stroke="#a9adaf" stroke-width="2"/></svg></div>
        </div>
    </footer>
</body>
</html>
```

FILE: styles.css
```css
* {
    box-sizing: border-box;
}
body {
    margin: 0;
    height: 100vh;
    overflow: hidden;
    display: flex;
    flex-direction: column;
    background-color: #000633;
    font-family: Inter, sans-serif;
    font-size: 24px;
}
button {
    padding: 0;
    border: none;
    background: none;
    color: inherit;
    font: inherit;
    cursor: pointer;
}
svg {
    display: block;
    flex: none;
}
a {
    text-decoration: none;
}
.defs {
    position: absolute;
}

/* Menu bar */
.menubar {
    flex: none;
    height: 76px;
    display: flex;
    justify-content: space-between;
    align-items: center;
    padding: 0 34px 2px 38px;
    background-color: #000735;
    border-bottom: 2px solid #000;
    color: #fff;
    font-size: 26px;
    font-weight: 500;
}
.menus,
.status {
    display: flex;
    align-items: center;
    gap: 39px;
}
.status {
    gap: 40px;
    color: #e6e7ea;
}
.dim {
    color: #5a5f80;
}
.clock {
    display: flex;
    gap: 18px;
    white-space: nowrap;
}

/* Window */
.window {
    flex: 1;
    min-height: 0;
    display: flex;
    flex-direction: column;
    overflow: hidden;
    border-radius: 24px 24px 32px 32px;
    background-color: #fff;
    box-shadow: 0 20px 60px 30px #000;
}
.browser {
    flex: none;
    border: 2px solid #74625d;
    border-bottom-color: #5a4a46;
    border-radius: 24px 24px 0 0;
    background-color: #4c3530;
    color: #e3bfb5;
    overflow: hidden;
}
.tabstrip {
    height: 78px;
    display: flex;
    align-items: center;
    padding: 0 12px 0 40px;
    background-color: #2d1b16;
}
.lights {
    display: flex;
    gap: 16px;
    width: 146px;
    flex: none;
}
.lights i {
    width: 24px;
    height: 24px;
    border-radius: 50%;
}
.red {
    background-color: #ed6a5e;
}
.yellow {
    background-color: #f4bf4f;
}
.green {
    background-color: #61c554;
}
.tab {
    position: relative;
    flex: 0 1 416px;
    display: flex;
    align-items: center;
    height: 58px;
    padding: 0 34px 2px 16px;
    min-width: 0;
}
.tab-title {
    flex: 1;
    margin: 0 14px 0 16px;
    overflow: hidden;
    white-space: nowrap;
    -webkit-mask-image: linear-gradient(90deg, #000 78%, transparent 97%);
    mask-image: linear-gradient(90deg, #000 78%, transparent 97%);
}
.tab.active {
    height: 68px;
    margin-top: 10px;
    padding-bottom: 12px;
    background-color: #4c3530;
    border-radius: 20px 20px 0 0;
    color: #f4e0da;
}
.tab.active::before,
.tab.active::after {
    content: "";
    position: absolute;
    bottom: 0;
    width: 24px;
    height: 24px;
}
.tab.active::before {
    right: 100%;
    background: radial-gradient(circle at 0 0, transparent 24px, #4c3530 24px);
}
.tab.active::after {
    left: 100%;
    background: radial-gradient(circle at 100% 0, transparent 24px, #4c3530 24px);
}
.tab.line::after {
    content: "";
    position: absolute;
    right: 0;
    width: 4px;
    height: 32px;
    border-radius: 2px;
    background-color: #4c3530;
}
.new-tab {
    margin-left: 14px;
}
.gemini {
    display: flex;
    align-items: center;
    gap: 12px;
    height: 56px;
    margin-left: auto;
    padding: 0 24px 0 18px;
    border-radius: 20px;
    background-color: #4c3530;
    color: #f6e4de;
    font-size: 26px;
    font-weight: 500;
}

/* Toolbar */
.toolbar {
    display: flex;
    align-items: center;
    padding: 12px 10px 0 6px;
}
.nav-btn {
    display: flex;
    justify-content: center;
    align-items: center;
    width: 72px;
    height: 68px;
}
.faded {
    color: #8a706a;
}
.reload {
    width: 68px;
    margin: 0 18px 0 2px;
    border-radius: 50%;
    background-color: #7c6661;
    color: #e8c3b8;
}
.address {
    flex: 1;
    display: flex;
    align-items: center;
    height: 68px;
    padding: 0 32px 0 10px;
    border-radius: 34px;
    background-color: #36221c;
}
.site-info {
    display: flex;
    justify-content: center;
    align-items: center;
    width: 48px;
    height: 48px;
    border-radius: 50%;
    background-color: #4c3530;
}
.url {
    flex: 1;
    min-width: 0;
    padding: 0 16px;
    border: none;
    outline: none;
    background: none;
    color: #f3e2dc;
    font-family: inherit;
    font-size: 28px;
}
.actions {
    display: flex;
    align-items: center;
    gap: 34px;
    padding: 0 24px 0 34px;
}
.divider {
    flex: none;
    width: 4px;
    height: 32px;
    border-radius: 2px;
    background-color: #674e48;
}
.avatar {
    border-radius: 50%;
}
.update {
    display: flex;
    align-items: center;
    gap: 20px;
    height: 68px;
    padding: 0 28px 0 22px;
    border-radius: 34px;
    background-color: #6e3524;
    color: #ffdacf;
    font-size: 26px;
    font-weight: 500;
}

/* Bookmarks bar */
.bookmarks {
    display: flex;
    align-items: center;
    height: 80px;
    padding: 0 28px 0 24px;
    color: #d6c2bc;
}
.apps {
    margin-right: 28px;
}
.bookmark {
    display: flex;
    align-items: center;
    gap: 12px;
    width: 308px;
    color: inherit;
    white-space: nowrap;
}
.apps + .divider {
    margin-right: 28px;
}
.bookmark.auto {
    width: 302px;
}
.bookmark.all {
    width: auto;
    gap: 16px;
    margin-left: 32px;
}
.grey {
    color: #bfc3c9;
}
.more {
    margin: 0 32px 0 auto;
}

/* API docs page */
.page {
    flex: 1;
    min-height: 0;
    overflow: hidden;
    padding: 100px 308px 0;
    background-color: #fefefe;
    color: #3b4151;
    font-family: "Liberation Sans", Arial, sans-serif;
}
.info {
    margin-bottom: 98px;
}
.title-row {
    display: flex;
    align-items: flex-start;
    gap: 10px;
}
h1 {
    margin: 0;
    font-size: 72px;
    line-height: 82px;
}
.badge {
    height: 40px;
    margin-top: 1px;
    padding: 0 15px;
    border-radius: 20px;
    background-color: #7d8492;
    color: #fff;
    font-size: 28px;
    font-weight: bold;
    line-height: 40px;
}
.badge.oas {
    padding: 0 8px;
    background-color: #93c03c;
}
.spec-link {
    display: block;
    margin-top: 10px;
    color: #4a84da;
    line-height: 28px;
}
.description {
    margin: 42px 0 0;
    font-size: 28px;
    line-height: 32px;
}
.tag {
    display: flex;
    justify-content: space-between;
    align-items: center;
    width: 100%;
    height: 101px;
    margin-bottom: 10px;
    padding: 0 52px 0 20px;
    border-bottom: 2px solid #c4c6cb;
}
h2 {
    margin: 0;
    font-size: 48px;
}
.opblock {
    display: flex;
    align-items: center;
    width: 100%;
    height: 80px;
    margin-bottom: 30px;
    padding: 0 22px 0 10px;
    border: 2px solid #74abf8;
    border-radius: 8px;
    background-color: #f0f7ff;
    box-shadow: 0 0 6px rgba(0, 0, 0, 0.19);
    text-align: left;
}
.method {
    width: 160px;
    border-radius: 6px;
    background-color: #74abf8;
    color: #fff;
    font-size: 28px;
    font-weight: bold;
    line-height: 56px;
    text-align: center;
    text-shadow: 0 2px 0 rgba(0, 0, 0, 0.1);
}
.opblock code {
    margin: 0 20px;
    font-family: "DejaVu Sans Mono", monospace;
    font-size: 32px;
    font-weight: bold;
}
.summary {
    flex: 1;
    font-size: 26px;
}

/* Dock */
.dock-area {
    position: relative;
    flex: none;
    padding: 4px 103px 10px;
}
.dock {
    display: flex;
    justify-content: space-between;
    align-items: center;
    height: 142px;
    padding: 0 18px;
    border: 2px solid #373a4d;
    border-radius: 48px;
    background: linear-gradient(#131521, #13173a);
    box-shadow: 0 0 80px rgba(0, 0, 0, 0.4);
}
.app {
    position: relative;
    width: 90px;
    height: 100px;
}
.app > svg {
    width: 90px;
    height: 90px;
    overflow: visible;
}
.app > svg.clip {
    border-radius: 20px;
    overflow: hidden;
}
.app.running::after {
    content: "";
    position: absolute;
    left: 41px;
    bottom: -17px;
    width: 8px;
    height: 8px;
    border-radius: 50%;
    background-color: #9598bd;
}
.dock-line {
    width: 2px;
    height: 106px;
    margin: 0 12px;
    background-color: #4b4e66;
}
.white {
    color: #fff;
}
.zoom-text {
    fill: #fff;
    font-size: 24px;
    font-weight: 600;
}
.badge-letter {
    fill: #fff;
    font-size: 22px;
    font-weight: bold;
}
```
